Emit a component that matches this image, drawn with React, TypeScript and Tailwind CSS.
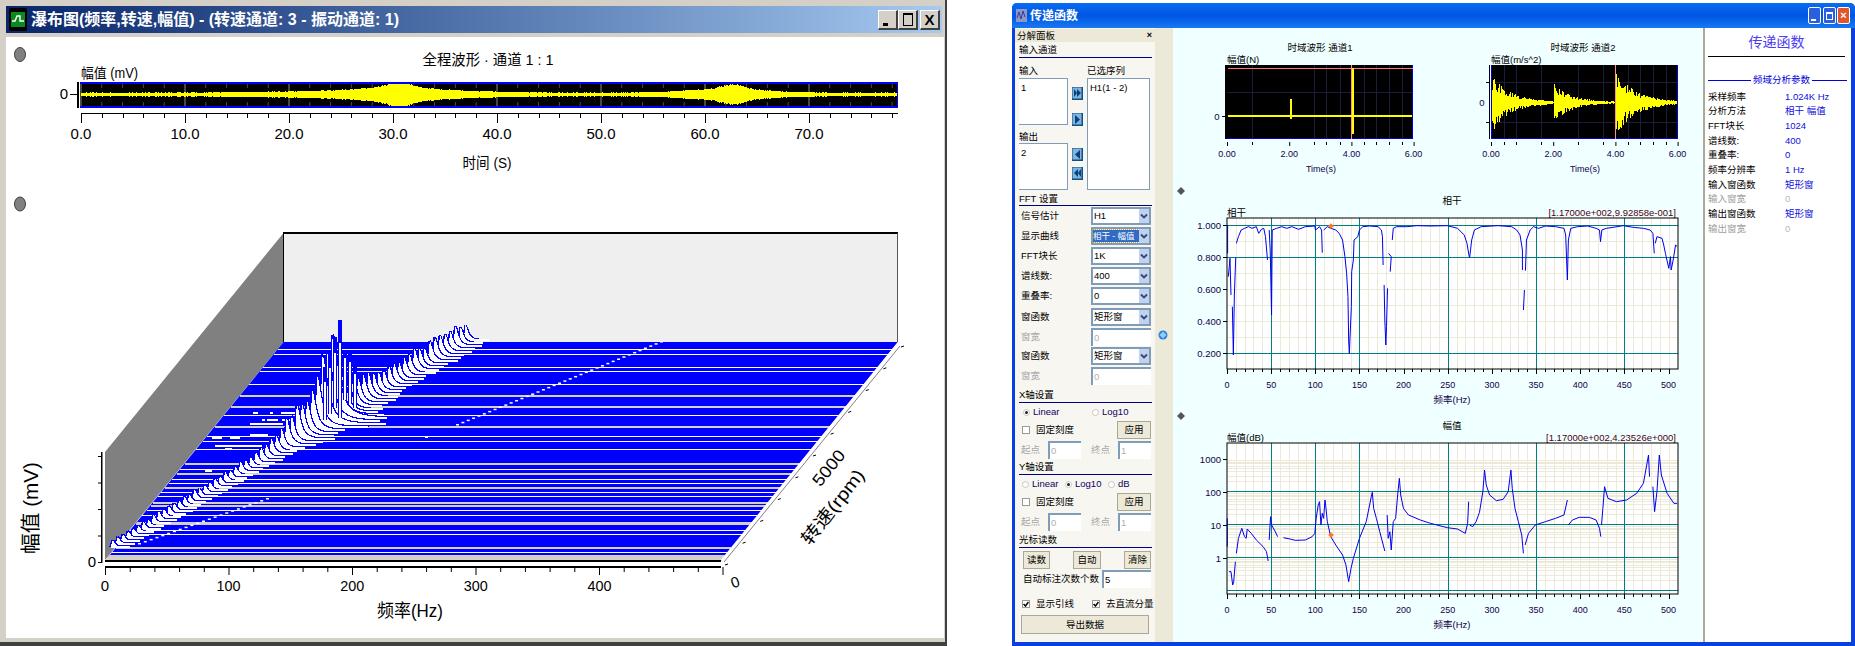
import type { ReactNode } from 'react'

const NAVY = '#100048'
const TEAL = '#007f7f'
const BEIGE = '#ece9d8'

// small seeded random so the drawn data stays the same between runs
function makeRand(seed: number) {
  let s = seed
  return () => {
    s = (s * 16807) % 2147483647
    return s / 2147483647
  }
}

const gauss = (t: number, c: number, w: number) => Math.exp(-((t - c) * (t - c)) / (2 * w * w))
const range = (from: number, to: number, step = 1) => {
  const out: number[] = []
  for (let v = from; v <= to; v += step) out.push(v)
  return out
}

function Svg({ x, y, w, h, children }: { x: number; y: number; w: number; h: number; children: ReactNode }) {
  return (
    <svg viewBox={`${x} ${y} ${w} ${h}`} width={w} height={h} className="block shrink-0">
      {children}
    </svg>
  )
}

type TextProps = {
  x: number
  y: number
  size: number
  fill?: string
  anchor?: 'start' | 'middle' | 'end'
  len?: number
  rotate?: number
  children: ReactNode
}

function T({ x, y, size, fill = '#000', anchor = 'middle', len, rotate, children }: TextProps) {
  return (
    <text
      x={x}
      y={y}
      fontSize={size}
      fill={fill}
      textAnchor={anchor}
      dominantBaseline="central"
      textLength={len}
      lengthAdjust={len ? 'spacingAndGlyphs' : undefined}
      transform={rotate ? `rotate(${rotate} ${x} ${y})` : undefined}
    >
      {children}
    </text>
  )
}

/* ---------- left window ---------- */

function OverviewChart() {
  const rand = makeRand(77)
  const top = 82
  const bottom = 108
  const mid = 94.5
  const ticks = range(0, 78, 2)
  const toX = (s: number) => 81 + s * 10.4
  const amp = (s: number) =>
    2 +
    6 * gauss(s, 30.6, 1.1) +
    4.5 * gauss(s, 30, 3.8) +
    1.2 * gauss(s, 22, 5) +
    4.5 * gauss(s, 62.6, 1) +
    4 * gauss(s, 62, 3.6) +
    1.2 * gauss(s, 36, 4)
  return (
    <Svg x={6} y={37} w={938} h={150}>
      <ellipse cx={20} cy={54.5} rx={5.5} ry={7} fill="#808080" stroke="#404040" />
      <T x={488} y={59} size={15} len={131}>全程波形 · 通道 1 : 1</T>
      <T x={81} y={73} size={14} anchor="start" len={57}>幅值 (mV)</T>
      <rect x={80} y={top} width={818} height={bottom - top} fill="#000" />
      {range(0, 70, 10).map((s) => (
        <line key={s} x1={toX(s)} x2={toX(s)} y1={top} y2={bottom} stroke="#8a8a8a" />
      ))}
      {ticks.map((s) => (
        <g key={s} stroke="#4a4a4a">
          <line x1={toX(s)} x2={toX(s)} y1={top + 2} y2={top + 6} />
          <line x1={toX(s)} x2={toX(s)} y1={bottom - 6} y2={bottom - 2} />
        </g>
      ))}
      <g shapeRendering="crispEdges">
        {range(81, 897).map((x) => {
          const a = Math.min(amp((x - 81) / 10.4) * (0.86 + rand() * 0.18), 12)
          return <line key={x} x1={x + 0.5} x2={x + 0.5} y1={mid - a} y2={mid + a} stroke="#ffff00" />
        })}
        <rect x={80} y={82} width={818} height={2} fill="#0000ff" />
        <rect x={80} y={106} width={818} height={2} fill="#0000ff" />
        <rect x={897} y={82} width={1} height={26} fill="#0000ff" />
        <rect x={77} y={82} width={1.5} height={26} fill="#000" />
        <rect x={70} y={94} width={7} height={1} fill="#000" />
        <rect x={81} y={113} width={817} height={1} fill="#000" />
        {ticks.map((s) => (
          <rect key={s} x={toX(s)} y={113} width={1} height={s % 10 === 0 ? 10 : 5} fill="#000" />
        ))}
      </g>
      <T x={64} y={93} size={15}>0</T>
      {range(0, 70, 10).map((s) => (
        <T key={s} x={toX(s)} y={133} size={15}>{s}.0</T>
      ))}
      <T x={487} y={162} size={15} len={49}>时间 (S)</T>
    </Svg>
  )
}

const FLOOR_STRIPES: [number, boolean][] = [
  [447, false], [463, false], [502, false], [512, false], [552, false], [585, true], [618, true],
  [646, false], [678, true], [708, false], [722, false], [748, false], [790, true], [806, false],
  [820, true], [838, false], [850, false], [860, true], [875, false], [888, false], [905, true],
  [916, true], [930, false], [945, false], [965, true], [968, true], [990, false], [1003, false],
  [1040, true], [1055, false],
]

// loose white dashes left of the ridge: [y, x from, x to]
const STRAY_DASHES: number[][] = [
  [412, 253, 258], [412, 270, 273], [412, 281, 310],
  [419, 262, 265], [419, 267, 278], [419, 282, 296],
  [423, 250, 283], [434, 250, 268], [437, 212, 222], [437, 230, 240],
  [445, 215, 262], [448, 225, 232], [470, 205, 212], [436, 425, 428],
]

// tall resonance spikes around the main peak: [x, blue top, white top, bottom]
const SPIKES: number[][] = [
  [339, 320, 343, 418],
  [334, 337, 353, 408],
  [329, 350, 368, 414],
  [344, 350, 358, 400],
  [349, 350, 362, 404],
  [354, 365, 374, 408],
  [324, 367, 382, 420],
]

function Waterfall() {
  const leftAt = (y: number) => 105 + ((561 - y) / 219) * 178.5
  const rand = makeRand(4242)

  // one slice per scan line step, painted from back to front
  const slices = range(340, 548, 3).map((y) => {
    const t = (561 - y) / 219
    const px = 113 + ((547 - y) / 210) * 358
    const h =
      (6 + 10 * t + 48 * gauss(t, 0.645, 0.016) + 30 * gauss(t, 0.62, 0.07) + 5 * gauss(t, 0.85, 0.1)) *
      (0.82 + rand() * 0.3)
    const tail = 12 + h * 0.65 * (0.7 + rand() * 0.5)
    const w = 2.5 + h * 0.05
    const curve = range(0, Math.round(tail)).map((d) => `${px + d},${y - h / (1 + (d / w) * (d / w))}`)
    return (
      <g key={y} shapeRendering="crispEdges">
        <polygon points={`${px - 3},${y} ${px - 2},${y - h * 0.6} ${curve.join(' ')} ${px + tail},${y}`} fill="#fff" />
        <polyline points={`${px - 3},${y} ${px - 1},${y - h}`} fill="none" stroke="#0000ff" strokeWidth={1.4} />
        <polyline points={curve.join(' ')} fill="none" stroke="#0000ff" strokeWidth={1.2} />
        <line x1={px - 2} x2={px + tail} y1={y} y2={y} stroke="#fff" strokeWidth={1.5} />
      </g>
    )
  })

  const diagDots = (x1: number, y1: number, x2: number, y2: number, n: number) =>
    range(0, n).map((i) => (
      <rect key={i} x={x1 + ((x2 - x1) * i) / n} y={y1 + ((y2 - y1) * i) / n} width={3} height={1.5} fill="#fff" />
    ))

  return (
    <Svg x={6} y={187} w={938} h={451}>
      <ellipse cx={20} cy={204} rx={5.5} ry={7} fill="#808080" stroke="#404040" />
      <polygon points="283.5,233 105,452 105,560 283.5,342" fill="#808080" />
      <rect x={283.5} y={233} width={614.5} height={109} fill="#efefef" />
      <rect x={283} y={232} width={615} height={2} fill="#000" />
      <rect x={283} y={233} width={1} height={109} fill="#000" />
      <rect x={897} y={233} width={1} height={109} fill="#555" />
      <polygon points="283.5,342 898,342 721,561 105,561" fill="#0000ff" />
      <g shapeRendering="crispEdges">
        {FLOOR_STRIPES.map(([z, gray]) => {
          const y = Math.round(200 + z / 3)
          return (
            <rect
              key={z}
              x={leftAt(y)}
              y={y}
              width={615}
              height={gray ? 2 : 1}
              fill={gray ? '#d4d0c8' : '#fff'}
            />
          )
        })}
      </g>
      <polygon points="110,555 727,555 722,560 105,560" fill="#d4d0c8" />
      {diagDots(456, 424, 660, 341, 38)}
      {diagDots(138, 543, 266, 498, 22)}
      <g shapeRendering="crispEdges" fill="#fff">
        {STRAY_DASHES.map(([y, a, b]) => (
          <rect key={`${y}-${a}`} x={a} y={y} width={b - a} height={1.5} />
        ))}
      </g>
      {slices}
      <g shapeRendering="crispEdges">
        {SPIKES.map(([x, blueTop, whiteTop, bottom]) => (
          <g key={x}>
            <rect x={x - 1} y={blueTop} width={4} height={bottom - blueTop} fill="#0000ff" />
            <rect x={x} y={whiteTop} width={2} height={bottom - whiteTop} fill="#fff" />
          </g>
        ))}
      </g>
      <rect x={105} y={560} width={616} height={2} fill="#000" />
      <line x1={722} y1={561} x2={899} y2={343} stroke="#fff" strokeWidth={3} />
      <line x1={724} y1={562} x2={900} y2={346} stroke="#808080" />
      {range(0, 10).map((i) => {
        const x = 725 + i * 17.6
        const y = 565 - i * 21.8
        return <line key={i} x1={x} y1={y} x2={x + 3} y2={y - 1} stroke="#000" />
      })}
      <rect x={101} y={452} width={1.5} height={111} fill="#000" />
      {range(0, 4).map((i) => (
        <rect key={i} x={98} y={562 - i * 26.5} width={3} height={1} fill="#000" />
      ))}
      <T x={92} y={561} size={15}>0</T>
      <T x={31} y={508} size={20} rotate={-90} len={92}>幅值 (mV)</T>
      <rect x={105} y={566} width={616} height={2} fill="#000" />
      {range(0, 25).map((i) => (
        <rect key={i} x={105 + i * 24.7} y={567} width={1} height={i % 5 === 0 ? 8 : 5} fill="#000" />
      ))}
      {range(0, 4).map((i) => (
        <T key={i} x={105 + i * 123.6} y={585} size={15} len={i === 0 ? undefined : 24}>{i * 100}</T>
      ))}
      <T x={410} y={611} size={18} len={66}>频率(Hz)</T>
      <T x={735} y={582} size={15} rotate={-20}>0</T>
      <T x={829} y={468} size={17} rotate={-51} len={41}>5000</T>
      <T x={833} y={507} size={18} rotate={-52} len={90}>转速(rpm)</T>
    </Svg>
  )
}

function ClassicButton({ children }: { children: ReactNode }) {
  return (
    <div className="w-[20px] h-[20px] bg-[#d4d0c8] border-t border-l border-white border-r-2 border-b-2 border-r-[#404040] border-b-[#404040] flex items-center justify-center shrink-0">
      {children}
    </div>
  )
}

function SpectrumWindow() {
  return (
    <div className="w-[947px] h-[646px] bg-[#d4d0c8] border-r-2 border-b-4 border-r-[#404040] border-b-[#404040] pt-[6px] pl-[6px] pr-[1px] pb-[4px] flex flex-col shrink-0">
      <div className="h-[27px] w-[936px] bg-linear-to-r from-[#0a246a] to-[#a6caf0] flex items-center pl-[3px] pr-[2px] shrink-0">
        <svg width="18" height="23" viewBox="0 0 18 23" className="shrink-0">
          <rect width="18" height="23" rx="2" fill="#000" />
          <rect x="2" y="4" width="14" height="15" fill="#0a8a20" />
          <path d="M3 13h3l2-5h3v5h4" fill="none" stroke="#fff" strokeWidth="1.4" />
        </svg>
        <span className="ml-[4px] text-[16px] font-bold text-white whitespace-nowrap">
          瀑布图(频率,转速,幅值) - (转速通道: 3 - 振动通道: 1)
        </span>
        <div className="ml-auto flex">
          <ClassicButton><span className="w-[5px] h-[3px] bg-black mt-[10px] -ml-[4px]" /></ClassicButton>
          <ClassicButton><span className="w-[10px] h-[13px] border border-black border-t-2" /></ClassicButton>
          <div className="w-[2px]" />
          <ClassicButton><span className="font-bold text-[15px] leading-none">X</span></ClassicButton>
        </div>
      </div>
      <div className="mt-[4px] w-[938px] h-[601px] bg-white flex flex-col">
        <OverviewChart />
        <Waterfall />
      </div>
    </div>
  )
}

/* ---------- right window, control panel ---------- */

function GroupHeader({ h, children }: { h: string; children: ReactNode }) {
  return (
    <div className={`${h} border-b border-[#000080] flex items-center text-[9.5px] leading-none`}>{children}</div>
  )
}

function Chevron() {
  return (
    <div className="w-[10px] h-full bg-[#c1d2ee] flex items-center justify-center shrink-0">
      <svg width="8" height="7" viewBox="0 0 8 7">
        <path d="M1 1.500l3 3 3-3" fill="none" stroke="#34447c" strokeWidth="1.8" />
      </svg>
    </div>
  )
}

function Combo({ value, selected }: { value: string; selected?: boolean }) {
  return (
    <div className="w-[60px] h-[18px] mr-[1px] bg-white border-2 border-[#7f9db9] flex items-center shrink-0">
      <div
        className={
          selected
            ? 'flex-1 h-[12px] bg-[#316ac5] text-white text-[8.5px] leading-[12px] whitespace-nowrap overflow-hidden outline-1 outline-dotted outline-[#c8a020]'
            : 'flex-1 pl-[1px] text-[9.5px] leading-none whitespace-nowrap'
        }
      >
        {value}
      </div>
      <Chevron />
    </div>
  )
}

function FieldRow({ label, mt, muted, children }: { label: string; mt: string; muted?: boolean; children: ReactNode }) {
  return (
    <div className={`${mt} h-[18px] flex items-center justify-between pl-[2px]`}>
      <span className={`text-[9.5px] leading-none ${muted ? 'text-[#a8a8a8]' : 'text-black'}`}>{label}</span>
      {children}
    </div>
  )
}

function TextBox({ value, w, muted }: { value: string; w: string; muted?: boolean }) {
  return (
    <div
      className={`${w} h-[18px] bg-white border-l-2 border-t-2 border-[#7f9db9] pl-[1px] flex items-center text-[9.5px] leading-none shrink-0 ${
        muted ? 'text-[#b0b0b0]' : 'text-black'
      }`}
    >
      {value}
    </div>
  )
}

function Radio({ on, label, w }: { on?: boolean; label: string; w: string }) {
  return (
    <div className={`${w} flex items-center shrink-0`}>
      <span className="w-[7px] h-[7px] rounded-full border border-[#c8c8c0] bg-white flex items-center justify-center shrink-0">
        {on && <span className="w-[3px] h-[3px] rounded-full bg-[#222]" />}
      </span>
      <span className="ml-[3px] text-[9.5px] leading-none text-[#100060]">{label}</span>
    </div>
  )
}

function Check({ on, label, w }: { on?: boolean; label: string; w: string }) {
  return (
    <div className={`${w} flex items-center shrink-0`}>
      <span className="w-[8px] h-[8px] border border-[#9a9a9a] bg-white flex items-center justify-center shrink-0">
        {on && (
          <svg width="6" height="6" viewBox="0 0 6 6">
            <path d="M0.5 3l2 2 3-4" fill="none" stroke="#000" strokeWidth="1.5" />
          </svg>
        )}
      </span>
      <span className="ml-[6px] text-[9.5px] leading-none whitespace-nowrap">{label}</span>
    </div>
  )
}

function FlatButton({ w, h = 'h-[18px]', children }: { w: string; h?: string; children: ReactNode }) {
  return (
    <div
      className={`${w} ${h} bg-[#ece9d8] border border-[#aca899] flex items-center justify-center text-[9.5px] leading-none shrink-0`}
    >
      {children}
    </div>
  )
}

function MoveButton({ d, mt }: { d: string; mt: string }) {
  return (
    <svg width="11" height="13" viewBox="0 0 11 13" className={`${mt} block`}>
      <rect width="11" height="13" fill="#0d4f86" />
      <rect x="0.5" y="0.5" width="9" height="11" fill="#7fb4dc" />
      <path d={d} fill="#0a3f78" />
    </svg>
  )
}

function ListBox({ h, w, children }: { h: string; w: string; children: ReactNode }) {
  return (
    <div className={`${w} ${h} bg-white border-t border-r border-b border-[#7f9db9] px-[2px] pt-[3px] text-[9.5px] leading-[12px] whitespace-nowrap`}>
      {children}
    </div>
  )
}

function ControlPanel() {
  return (
    <div className="w-[140px] h-full bg-[#f8f6f1] flex flex-col shrink-0">
      <div className="mt-[1px] h-[13px] bg-[#ece9d8] flex items-center justify-between pl-[2px] pr-[3px] text-[9.5px] leading-none shrink-0">
        <span>分解面板</span>
        <span className="font-bold text-[9px]">×</span>
      </div>
      <div className="pl-[4px] pr-[3px] flex flex-col">
        <GroupHeader h="h-[16px]">输入通道</GroupHeader>
        <div className="h-[134px] flex">
          <div className="w-[49px] pt-[8px] shrink-0">
            <div className="h-[10px] text-[9.5px] leading-none">输入</div>
            <div className="mt-[2px]"><ListBox w="w-[49px]" h="h-[47px]">1</ListBox></div>
            <div className="mt-[7px] h-[10px] text-[9.5px] leading-none">输出</div>
            <div className="mt-[1px]"><ListBox w="w-[49px]" h="h-[47px]">2</ListBox></div>
          </div>
          <div className="w-[11px] ml-[4px] shrink-0">
            <MoveButton mt="mt-[29px]" d="M2 2l3 4-3 4zM5 2l4 4-4 4z" />
            <MoveButton mt="mt-[13px]" d="M3 2l5 4.500-5 4.500z" />
            <MoveButton mt="mt-[22px]" d="M8 2l-5 4.500 5 4.500z" />
            <MoveButton mt="mt-[6px]" d="M9 2l-3 4 3 4zM6 2l-4 4 4 4z" />
          </div>
          <div className="w-[63px] ml-[4px] pt-[8px] shrink-0">
            <div className="h-[10px] text-[9.5px] leading-none">已选序列</div>
            <div className="mt-[2px]">
              <div className="h-[112px] w-[63px] bg-white border border-[#7f9db9] px-[2px] pt-[3px] text-[9.5px] leading-[12px]">H1(1 - 2)</div>
            </div>
          </div>
        </div>
        <GroupHeader h="h-[14px]">FFT 设置</GroupHeader>
        <FieldRow label="信号估计" mt="mt-[1px]"><Combo value="H1" /></FieldRow>
        <FieldRow label="显示曲线" mt="mt-[2px]"><Combo value="相干 - 幅值" selected /></FieldRow>
        <FieldRow label="FFT块长" mt="mt-[2px]"><Combo value="1K" /></FieldRow>
        <FieldRow label="谱线数:" mt="mt-[2px]"><Combo value="400" /></FieldRow>
        <FieldRow label="重叠率:" mt="mt-[2px]"><Combo value="0" /></FieldRow>
        <FieldRow label="窗函数" mt="mt-[3px]"><Combo value="矩形窗" /></FieldRow>
        <FieldRow label="窗宽" mt="mt-[2px]" muted>
          <div className="mr-[1px]"><TextBox w="w-[60px]" value="0" muted /></div>
        </FieldRow>
        <FieldRow label="窗函数" mt="mt-[1px]"><Combo value="矩形窗" /></FieldRow>
        <FieldRow label="窗宽" mt="mt-[2px]" muted>
          <div className="mr-[1px]"><TextBox w="w-[60px]" value="0" muted /></div>
        </FieldRow>

        <div className="mt-[3px]"><GroupHeader h="h-[15px]">X轴设置</GroupHeader></div>
        <div className="mt-[4px] h-[10px] flex items-center pl-[4px]">
          <Radio on label="Linear" w="w-[69px]" />
          <Radio label="Log10" w="w-[50px]" />
        </div>
        <div className="mt-[4px] h-[18px] flex items-center justify-between pl-[3px] pr-[1px]">
          <Check label="固定刻度" w="w-[60px]" />
          <FlatButton w="w-[34px]">应用</FlatButton>
        </div>
        <div className="mt-[2px] h-[18px] flex items-center pl-[2px]">
          <span className="w-[27px] text-[9.5px] leading-none text-[#a8a8a8]">起点</span>
          <TextBox w="w-[33px]" value="0" muted />
          <span className="w-[37px] pl-[10px] text-[9.5px] leading-none text-[#a8a8a8]">终点</span>
          <TextBox w="w-[33px]" value="1" muted />
        </div>

        <div className="mt-[1px]"><GroupHeader h="h-[15px]">Y轴设置</GroupHeader></div>
        <div className="mt-[4px] h-[10px] flex items-center pl-[3px]">
          <Radio label="Linear" w="w-[43px]" />
          <Radio on label="Log10" w="w-[43px]" />
          <Radio label="dB" w="w-[30px]" />
        </div>
        <div className="mt-[4px] h-[18px] flex items-center justify-between pl-[3px] pr-[1px]">
          <Check label="固定刻度" w="w-[60px]" />
          <FlatButton w="w-[34px]">应用</FlatButton>
        </div>
        <div className="mt-[2px] h-[18px] flex items-center pl-[2px]">
          <span className="w-[27px] text-[9.5px] leading-none text-[#a8a8a8]">起点</span>
          <TextBox w="w-[33px]" value="0" muted />
          <span className="w-[37px] pl-[10px] text-[9.5px] leading-none text-[#a8a8a8]">终点</span>
          <TextBox w="w-[33px]" value="1" muted />
        </div>

        <div className="mt-[2px]"><GroupHeader h="h-[15px]">光标读数</GroupHeader></div>
        <div className="mt-[3px] h-[18px] flex justify-between pl-[4px] pr-[1px]">
          <FlatButton w="w-[27px]">读数</FlatButton>
          <FlatButton w="w-[28px]">自动</FlatButton>
          <FlatButton w="w-[27px]">清除</FlatButton>
        </div>
        <div className="mt-[1px] h-[18px] flex items-center justify-between pl-[4px] pr-[1px]">
          <span className="text-[9.5px] leading-none whitespace-nowrap">自动标注次数个数</span>
          <TextBox w="w-[49px]" value="5" />
        </div>
        <div className="mt-[11px] h-[10px] flex items-center pl-[3px]">
          <Check on label="显示引线" w="w-[70px]" />
          <Check on label="去直流分量" w="w-[60px]" />
        </div>
        <div className="mt-[6px] ml-[2px]">
          <FlatButton w="w-[128px]" h="h-[19px]">导出数据</FlatButton>
        </div>
      </div>
    </div>
  )
}

/* ---------- right window, time charts ---------- */

function TimeAxis({ x0, vLines }: { x0: number; vLines: number[] }) {
  const labels = ['0.00', '2.00', '4.00', '6.00']
  return (
    <g>
      {vLines.map((x) => (
        <rect key={x} x={x} y={142} width={1} height={3} fill="#000" />
      ))}
      {labels.map((l, i) => (
        <g key={l}>
          <rect x={x0 + i * 62.2} y={142} width={1} height={4} fill="#000" />
          <T x={x0 + i * 62.2} y={154} size={9} fill={NAVY}>{l}</T>
        </g>
      ))}
      <T x={x0 + 94} y={169} size={9} fill={NAVY}>Time(s)</T>
    </g>
  )
}

function ForceChart() {
  const vLines = [1252, 1314, 1326, 1340, 1364, 1376, 1389, 1402]
  return (
    <Svg x={1173} y={28} w={267} h={157}>
      <T x={1320} y={47} size={9.5}>时域波形  通道1</T>
      <T x={1227} y={59} size={9.5} anchor="start">幅值(N)</T>
      <g shapeRendering="crispEdges">
        <rect x={1227} y={65} width={186} height={74} fill="#000" />
        {vLines.map((x) => (
          <rect key={x} x={x} y={65} width={1} height={74} fill="#1c1c3c" />
        ))}
        <rect x={1227} y={92} width={186} height={1} fill="#1c1c3c" />
        <rect x={1412} y={65} width={1} height={74} fill="#0000e0" />
        <rect x={1227} y={138} width={186} height={1} fill="#0000e0" />
        <rect x={1225} y={65} width={1.5} height={74} fill="#000" />
        <rect x={1228} y={68} width={185} height={1} fill="#ff7070" />
        <rect x={1351} y={65} width={1} height={74} fill="#ff9090" />
        <rect x={1228} y={115} width={184} height={2} fill="#ffff00" />
        <rect x={1352} y={68} width={1.5} height={66} fill="#ffff00" />
        <rect x={1290} y={99} width={1.5} height={20} fill="#ffff00" />
        <rect x={1222} y={116} width={3} height={1} fill="#000" />
      </g>
      <T x={1217} y={116} size={9.5} fill={NAVY}>0</T>
      <TimeAxis x0={1227} vLines={vLines} />
    </Svg>
  )
}

function AccelChart() {
  const rand = makeRand(991)
  const vLines = [1504, 1516, 1541, 1578, 1603, 1628, 1640, 1653, 1666]
  const hits = [
    { x0: 1492, a: 26, tau: 20 },
    { x0: 1554, a: 18, tau: 18 },
    { x0: 1616, a: 30, tau: 20 },
  ]
  return (
    <Svg x={1440} y={28} w={263} h={157}>
      <T x={1583} y={47} size={9.5}>时域波形  通道2</T>
      <T x={1491} y={59} size={9.5} anchor="start">幅值(m/s^2)</T>
      <g shapeRendering="crispEdges">
        <rect x={1491} y={65} width={187} height={74} fill="#000" />
        {vLines.map((x) => (
          <rect key={x} x={x} y={65} width={1} height={74} fill="#1c1c3c" />
        ))}
        <rect x={1491} y={82} width={187} height={1} fill="#1c1c3c" />
        <rect x={1491} y={122} width={187} height={1} fill="#1c1c3c" />
        <rect x={1491} y={65} width={1} height={74} fill="#0000e0" />
        <rect x={1677} y={65} width={1} height={74} fill="#0000e0" />
        <rect x={1491} y={138} width={187} height={1} fill="#0000e0" />
        <rect x={1489} y={65} width={1} height={74} fill="#000" />
        <rect x={1486} y={82} width={3} height={1} fill="#000" />
        <rect x={1486} y={122} width={3} height={1} fill="#000" />
        <rect x={1493} y={102} width={184} height={1} fill="#ffff00" />
        {hits.map((hit) =>
          range(0, 60).map((d) => {
            const up = hit.a * Math.exp(-d / hit.tau) * (0.45 + rand() * 0.55)
            const down = hit.a * 1.1 * Math.exp(-d / hit.tau) * (0.45 + rand() * 0.55)
            return (
              <rect key={`${hit.x0}-${d}`} x={hit.x0 + d} y={102 - up} width={1} height={up + down + 1} fill="#ffff00" />
            )
          }),
        )}
        <rect x={1615} y={65} width={1} height={74} fill="#ff9090" />
      </g>
      <T x={1482} y={102} size={9.5} fill={NAVY}>0</T>
      <TimeAxis x0={1491} vLines={vLines} />
    </Svg>
  )
}

/* ---------- right window, frequency charts ---------- */

const COHERENCE: number[][] = [
  [200, 136, 200, 220],
  [202, 290, 205, 260, 207, 235, 210, 345],
  [214, 380, 217, 525, 220, 345, 224, 232],
  [226, 190, 232, 170, 240, 150, 250, 145, 262, 140, 272, 145, 285, 140, 292, 160, 300, 148, 307, 145, 312, 170, 318, 240],
  [323, 150, 326, 210, 330, 405, 332, 150, 345, 145, 360, 140, 375, 145, 390, 140, 410, 148, 430, 140, 458, 138, 460, 150, 472, 140, 478, 150, 480, 218],
  [484, 150, 495, 140, 505, 145, 520, 150, 530, 160, 540, 180, 547, 230, 552, 280, 556, 350, 558, 480, 560, 520, 563, 450, 566, 380, 567, 275, 572, 240, 574, 180, 585, 170, 590, 150, 600, 140, 620, 138, 645, 140, 655, 150, 658, 170, 660, 255],
  [663, 315, 665, 420, 668, 495, 670, 440, 673, 325],
  [676, 220, 684, 230, 681, 275],
  [687, 180, 690, 145, 700, 140, 730, 140, 760, 137, 800, 138, 850, 137, 880, 145, 900, 165, 908, 190, 915, 232],
  [916, 232, 922, 180, 930, 150, 950, 140, 1000, 137, 1040, 140, 1055, 150, 1065, 165, 1072, 210, 1072, 270],
  [1075, 390, 1078, 330],
  [1081, 272, 1084, 180, 1095, 150, 1105, 140, 1120, 145, 1140, 138, 1170, 140, 1195, 145, 1200, 165, 1205, 300, 1208, 180, 1215, 145, 1235, 140, 1265, 138, 1290, 145, 1300, 150, 1303, 185, 1307, 150, 1320, 145, 1340, 142, 1370, 137, 1400, 142, 1430, 145, 1450, 150, 1458, 160, 1462, 220],
  [1465, 190, 1470, 170, 1485, 175, 1490, 195, 1495, 220, 1505, 265, 1510, 230, 1512, 270, 1518, 240, 1525, 195, 1530, 200],
]

const MAGNITUDE: number[][] = [
  [199, 340, 199, 425],
  [204, 500, 210, 500, 215, 540, 218, 530, 223, 470],
  [226, 445, 232, 400, 242, 370, 250, 395, 255, 400, 258, 372, 270, 385, 285, 405, 305, 425, 315, 440, 320, 468],
  [323, 405, 327, 335, 330, 360, 340, 378, 348, 395],
  [365, 398, 385, 402, 400, 406, 430, 405, 450, 395, 458, 385, 462, 340, 468, 300, 472, 290, 476, 360, 480, 325, 484, 340, 488, 285, 490, 300, 495, 350, 505, 395, 520, 420, 540, 450, 550, 480, 558, 530, 565, 490, 572, 460, 590, 400, 610, 350, 625, 275, 628, 262, 632, 310, 640, 340, 650, 380, 665, 438],
  [672, 330, 675, 400, 680, 380, 684, 435, 690, 350, 697, 340, 703, 270, 708, 220, 712, 270, 720, 310, 735, 330, 770, 345, 800, 355, 850, 368, 880, 372, 903, 385, 910, 355, 913, 290],
  [916, 360, 925, 365, 935, 350, 945, 322, 955, 260, 960, 195, 965, 240, 975, 270, 995, 287, 1015, 283, 1030, 260, 1038, 195, 1042, 250, 1050, 310, 1060, 350, 1070, 390, 1075, 445],
  [1080, 420, 1090, 385, 1110, 360, 1140, 350, 1170, 340, 1195, 330, 1205, 285],
  [1208, 360, 1220, 345, 1240, 337, 1270, 337, 1290, 345, 1300, 370, 1304, 395],
  [1306, 360, 1310, 310, 1315, 245, 1325, 280, 1350, 290, 1380, 285, 1410, 265, 1430, 235, 1445, 150, 1448, 215],
  [1458, 245, 1463, 320, 1470, 260, 1477, 150, 1483, 210, 1500, 265, 1520, 295, 1530, 295],
]

const HZ_X = (f: number) => 1227 + f * 0.883
const TEAL_FREQS = [50, 100, 150, 250, 350, 450]

type FreqChartProps = {
  top: number
  svgH: number
  circleY: number
  title: string
  yLabel: string
  cursor: string
  hMajor: number[]
  hMinor: number[]
  yTicks: [string, number][]
  curve: number[][]
  marker: [number, number]
  xLabel: string
}

function FreqChart({ top, svgH, circleY, title, yLabel, cursor, hMajor, hMinor, yTicks, curve, marker, xLabel }: FreqChartProps) {
  const plotTop = top + 33
  const plotBottom = plotTop + 151
  const zx = (z: number) => 1160 + z / 2.958
  const zy = (z: number) => (top === 185 ? 180 : 410) + z / 3
  return (
    <Svg x={1173} y={top} w={530} h={svgH}>
      <polygon
        points={`1181,${circleY - 4} 1185,${circleY} 1181,${circleY + 4} 1177,${circleY}`}
        fill="#555"
      />
      <T x={1452} y={top + 15} size={9.5}>{title}</T>
      <T x={1227} y={top + 27} size={9.5} anchor="start">{yLabel}</T>
      <T x={1676} y={top + 27} size={9.5} anchor="end" fill="#500010">{cursor}</T>
      <g shapeRendering="crispEdges">
        <rect x={1227} y={plotTop} width={451} height={151} fill="#fff" />
        {range(10, 500, 10)
          .filter((f) => !TEAL_FREQS.includes(f))
          .map((f) => (
            <rect key={f} x={HZ_X(f)} y={plotTop} width={1} height={151} fill={BEIGE} />
          ))}
        {hMinor.map((y) => (
          <rect key={y} x={1227} y={y} width={451} height={1} fill={BEIGE} />
        ))}
        {TEAL_FREQS.map((f) => (
          <rect key={f} x={HZ_X(f)} y={plotTop} width={1} height={151} fill={TEAL} />
        ))}
        {hMajor.map((y) => (
          <rect key={y} x={1227} y={y} width={451} height={1} fill={TEAL} />
        ))}
        {range(0, 50).map((i) => (
          <rect key={i} x={HZ_X(i * 10)} y={plotBottom} width={1} height={i % 5 === 0 ? 5 : 3} fill="#000" />
        ))}
      </g>
      <g fill="none" stroke="#0000ee" strokeWidth={1}>
        {curve.map((seg, i) => {
          const pts: string[] = []
          for (let n = 0; n < seg.length; n += 2) pts.push(`${zx(seg[n])},${zy(seg[n + 1])}`)
          return <polyline key={i} points={pts.join(' ')} />
        })}
      </g>
      <rect x={marker[0] - 2} y={marker[1] - 2} width={4} height={4} fill="#ff7a1a" transform={`rotate(45 ${marker[0]} ${marker[1]})`} />
      <rect x={1227} y={plotTop} width={451} height={151} fill="none" stroke="#000" />
      {yTicks.map(([label, y]) => (
        <g key={label}>
          <rect x={1223} y={y} width={4} height={1} fill="#000" />
          <T x={1221} y={y} size={9.5} anchor="end" fill={NAVY}>{label}</T>
        </g>
      ))}
      {range(0, 10).map((i) => (
        <T key={i} x={HZ_X(i * 50)} y={plotBottom + 16} size={9} fill={NAVY}>{i * 50}</T>
      ))}
      <T x={1452} y={plotBottom + 30} size={9.5} fill={NAVY}>{xLabel}</T>
    </Svg>
  )
}

function logMinors() {
  const out: number[] = []
  for (const base of [556, 457, 358, 259]) {
    for (const n of [2, 3, 4, 5, 6, 7, 8, 9]) {
      const z = base - 99 * Math.log10(n)
      if (z > 118) out.push(Math.round(410 + z / 3))
    }
  }
  return out
}

function ResultRow({ label, value, muted }: { label: string; value: string; muted?: boolean }) {
  return (
    <div className="h-[14.7px] flex items-center text-[9.5px] leading-none whitespace-nowrap">
      <span className={`w-[77px] ${muted ? 'text-[#a0a0a0]' : 'text-black'}`}>{label}</span>
      <span className={muted ? 'text-[#c0b8a8]' : 'text-[#1010e0]'}>{value}</span>
    </div>
  )
}

function ResultPanel() {
  return (
    <div className="w-[146px] h-full bg-white flex flex-col pl-[3px] pr-[4px] shrink-0">
      <div className="h-[28px] flex items-center justify-center text-[14px] leading-none text-[#4a3cf0] pr-[2px]">传递函数</div>
      <div className="h-px bg-black mr-[2px]" />
      <div className="mt-[18px] h-[10px] flex items-center text-[9.5px] leading-none text-[#0000e0]">
        <span className="w-[43px] h-px bg-[#0000e0]" />
        <span className="mx-[2px] whitespace-nowrap">频域分析参数</span>
        <span className="flex-1 h-px bg-[#0000e0]" />
      </div>
      <div className="mt-[4px] flex flex-col">
        <ResultRow label="采样频率" value="1.024K Hz" />
        <ResultRow label="分析方法" value="相干  幅值" />
        <ResultRow label="FFT块长" value="1024" />
        <ResultRow label="谱线数:" value="400" />
        <ResultRow label="重叠率:" value="0" />
        <ResultRow label="频率分辨率" value="1 Hz" />
        <ResultRow label="输入窗函数" value="矩形窗" />
        <ResultRow label="输入窗宽" value="0" muted />
        <ResultRow label="输出窗函数" value="矩形窗" />
        <ResultRow label="输出窗宽" value="0" muted />
      </div>
    </div>
  )
}

function XpButton({ bg, children }: { bg: string; children: ReactNode }) {
  return (
    <div className={`w-[13px] h-[17px] rounded-[2px] border border-white ${bg} flex items-center justify-center shrink-0`}>
      {children}
    </div>
  )
}

function TransferWindow() {
  return (
    <div className="w-[843px] h-[643px] mt-[3px] bg-[#0a3fe0] rounded-t-[5px] pl-[3px] pr-[4px] pb-[4px] flex flex-col shrink-0">
      <div className="-mx-[3px] -mr-[4px] h-[25px] rounded-t-[5px] bg-linear-to-b from-[#0a6cf4] via-[#0055e3] to-[#1a78f2] flex items-center pl-[4px] pr-[5px] shrink-0">
        <svg width="11" height="13" viewBox="0 0 11 13" className="shrink-0">
          <rect width="11" height="13" fill="#8c96c8" />
          <path d="M1 9l2-6 2 7 2-8 2 6" fill="none" stroke="#3a3a9a" />
        </svg>
        <span className="ml-[3px] text-[12px] font-bold leading-none text-white">传递函数</span>
        <div className="ml-auto flex gap-[1.5px]">
          <XpButton bg="bg-[#2a5fe0]"><span className="w-[5px] h-[2px] bg-white mt-[8px] -ml-[3px]" /></XpButton>
          <XpButton bg="bg-[#2a5fe0]"><span className="w-[7px] h-[8px] border border-white border-t-2" /></XpButton>
          <XpButton bg="bg-[#e2562c]"><span className="text-white font-bold text-[11px] leading-none">×</span></XpButton>
        </div>
      </div>
      <div className="flex-1 flex bg-[#ece9d8] min-h-0">
        <ControlPanel />
        <div className="w-[18px] h-full bg-[#ece9d8] flex flex-col items-center pt-[302px] shrink-0">
          <svg width="10" height="10" viewBox="0 0 10 10" className="-ml-[2px]">
            <circle cx="5" cy="5" r="4.500" fill="#2f7fe0" />
            <polygon points="5,1.500 8.500,5 5,8.500 1.500,5" fill="#8fd0ff" />
          </svg>
        </div>
        <div className="w-[530px] h-full bg-[#f0ffff] flex flex-col shrink-0">
          <div className="flex">
            <ForceChart />
            <AccelChart />
          </div>
          <FreqChart
            top={185}
            svgH={225}
            circleY={191}
            title="相干"
            yLabel="相干"
            cursor="[1.17000e+002,9.92858e-001]"
            hMajor={[225, 257, 353]}
            hMinor={[241, 273, 289, 305, 321, 337]}
            yTicks={[['1.000', 225], ['0.800', 257], ['0.600', 289], ['0.400', 321], ['0.200', 353]]}
            curve={COHERENCE}
            marker={[1331, 226]}
            xLabel="频率(Hz)"
          />
          <FreqChart
            top={415}
            svgH={227}
            circleY={421}
            title="幅值"
            yLabel="幅值(dB)"
            cursor="[1.17000e+002,4.23526e+000]"
            hMajor={[496, 529, 562, 595]}
            hMinor={logMinors()}
            yTicks={[['1000', 464], ['100', 497], ['10', 530], ['1', 563]]}
            curve={MAGNITUDE}
            marker={[1331, 540]}
            xLabel="频率(Hz)"
          />
        </div>
        <div className="w-[2px] h-full bg-[#aca899] shrink-0" />
        <ResultPanel />
      </div>
    </div>
  )
}

export default function App() {
  return (
    <div className="w-[1855px] h-[646px] bg-white flex justify-between overflow-hidden font-['Liberation_Sans','Noto_Sans_CJK_SC',sans-serif]">
      <SpectrumWindow />
      <TransferWindow />
    </div>
  )
}
